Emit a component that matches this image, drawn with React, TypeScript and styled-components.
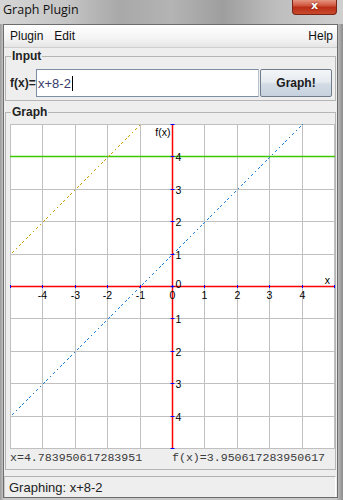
import { createGlobalStyle } from "styled-components";
import styled from "styled-components";

const GlobalStyle = createGlobalStyle`
  html, body {
    margin: 0;
    padding: 0;
    background: #ffffff;
  }
  body {
    font-family: "Liberation Sans", Arial, sans-serif;
  }
`;

const Window = styled.div`
  width: 343px;
  height: 500px;
  display: flex;
  flex-direction: column;
  background: linear-gradient(90deg, #9a9a9a 0%, #c8c8c8 1%, #c8c8c8 98%, #8c8c8c 100%);
  overflow: hidden;
`;

const TitleBar = styled.div`
  height: 24px;
  flex-shrink: 0;
  display: flex;
  align-items: flex-start;
  justify-content: space-between;
  padding: 0 6px 0 3px;
  background: linear-gradient(
    90deg,
    #d6d6d6 0%,
    #c4c4c4 20%,
    #a8a8a8 35%,
    #b4b4b4 50%,
    #9e9e9e 65%,
    #bdbdbd 80%,
    #d0d0d0 100%
  );
`;

const Title = styled.span`
  font-family: "Open Sans", "Noto Sans", sans-serif;
  font-size: 12.5px;
  line-height: 20px;
  color: #111;
`;

const CloseButton = styled.div`
  width: 43px;
  height: 15px;
  margin-top: -1px;
  border: 1px solid #7a2418;
  border-top: none;
  border-radius: 0 0 4px 4px;
  background: linear-gradient(180deg, #e8a08c 0%, #d0553c 45%, #b82e16 55%, #c94a2e 100%);
  color: #fff;
  font-family: "DejaVu Sans", sans-serif;
  font-weight: bold;
  font-size: 11px;
  line-height: 13px;
  text-align: center;
  text-shadow: 0 0 2px #5a1008;
`;

const Frame = styled.div`
  flex: 1;
  margin: 0 5px 3px 3px;
  border: 1px solid #6d6d6d;
  background: #eeeeee;
  display: flex;
  flex-direction: column;
`;

const MenuBar = styled.div`
  height: 22px;
  flex-shrink: 0;
  display: flex;
  align-items: center;
  padding: 0 4px 0 6px;
  background: linear-gradient(180deg, #ffffff 0%, #f4f4f4 60%, #e6e6e6 100%);
  border-bottom: 1px solid #cfcfcf;
`;

const MenuItem = styled.span<{ $push?: boolean }>`
  font-size: 12px;
  color: #111;
  margin-right: ${(p) => (p.$push ? "0" : "11px")};
  margin-left: ${(p) => (p.$push ? "auto" : "0")};
`;

const Group = styled.fieldset<{ $grow?: boolean }>`
  margin: 0 1px 0 1px;
  padding: ${(p) => (p.$grow ? "6px 3px 3px 4px" : "7px 3px 3px 4px")};
  border: 1px solid #b5b5b5;
  min-width: 0;
  ${(p) => (p.$grow ? "flex: 1;" : "flex-shrink: 0;")}
`;

const Legend = styled.legend`
  font-size: 12px;
  font-weight: bold;
  color: #222;
  padding: 0 1px;
  margin-left: 1px;
  line-height: 12px;
`;

const InputRow = styled.div`
  display: flex;
  align-items: center;
  height: 28px;
`;

const FxLabel = styled.span`
  font-size: 12px;
  font-weight: bold;
  color: #222;
  width: 26px;
  flex-shrink: 0;
`;

const FormulaField = styled.div`
  flex: 1;
  height: 26px;
  border: 1px solid #7c8ea3;
  border-right-color: #b6c2cf;
  background: #ffffff;
  display: flex;
  align-items: center;
  padding-left: 1px;
  font-size: 13px;
  color: #3b3b6b;
`;

const Caret = styled.span`
  display: inline-block;
  width: 1px;
  height: 15px;
  background: #000;
  margin-left: 1px;
`;

const GraphButton = styled.div`
  width: 70px;
  height: 26px;
  margin-left: 1px;
  border: 1px solid #707c8a;
  border-radius: 2px;
  background: linear-gradient(180deg, #f4f6f8 0%, #e6ebf0 45%, #d2dbe5 55%, #c6d2df 100%);
  display: flex;
  align-items: center;
  justify-content: center;
  font-size: 12px;
  font-weight: bold;
  color: #1a1a1a;
`;

const Spacer = styled.div<{ $h: number }>`
  height: ${(p) => p.$h}px;
  flex-shrink: 0;
`;

const PlotWrap = styled.div`
  display: flex;
  flex-direction: column;
`;

const Readout = styled.div`
  display: grid;
  grid-template-columns: 162px 162px;
  height: 17px;
  align-items: center;
  font-family: "Liberation Mono", "Courier New", monospace;
  font-size: 11.6px;
  color: #3a3a3a;
  white-space: nowrap;
`;

const StatusBar = styled.div`
  margin: 6px 1px 0 0;
  height: 20px;
  flex-shrink: 0;
  border-top: 1px solid #b0b0b0;
  border-left: 1px solid #c8c8c8;
  border-right: 1px solid #ffffff;
  display: flex;
  align-items: center;
  padding-left: 4px;
  font-size: 13px;
  color: #222;
`;

const U = 32.4;
const px = (x: number) => Math.round((x + 5) * U) + 0.5;
const py = (y: number) => Math.round((5 - y) * U) + 0.5;

const Plot = () => {
  const units = [-5, -4, -3, -2, -1, 0, 1, 2, 3, 4, 5];
  return (
    <svg width={325} height={325} viewBox="0 0 325 325" style={{ display: "block" }}>
      <rect x={0} y={0} width={325} height={325} fill="#ffffff" />
      {units.map((u) => (
        <g key={`g${u}`}>
          <line x1={px(u)} y1={0} x2={px(u)} y2={325} stroke="#c0c0c0" strokeWidth={1} />
          <line x1={0} y1={py(u)} x2={325} y2={py(u)} stroke="#c0c0c0" strokeWidth={1} />
        </g>
      ))}
      {/* horizontal reference line */}
      <line x1={0} y1={py(4)} x2={325} y2={py(4)} stroke="#3cc800" strokeWidth={1.5} />
      {/* plotted lines */}
      <line
        x1={px(-5)}
        y1={py(1)}
        x2={px(-1)}
        y2={py(5)}
        stroke="#c9a000"
        strokeWidth={1.2}
        strokeDasharray="1 1"
        shapeRendering="crispEdges"
      />
      <line
        x1={px(-5)}
        y1={py(-4)}
        x2={px(4)}
        y2={py(5)}
        stroke="#1e7fd6"
        strokeWidth={1.2}
        strokeDasharray="1 1"
        shapeRendering="crispEdges"
      />
      {/* axes */}
      <line x1={0} y1={py(0)} x2={325} y2={py(0)} stroke="#ff0000" strokeWidth={1.5} />
      <line x1={px(0)} y1={0} x2={px(0)} y2={325} stroke="#ff0000" strokeWidth={1.5} />
      {units.map((u) => (
        <g key={`t${u}`}>
          <line x1={px(u)} y1={py(0) - 1.5} x2={px(u)} y2={py(0) + 1.5} stroke="#0000ff" strokeWidth={1} />
          <line x1={px(0) - 2} y1={py(u)} x2={px(0) + 2} y2={py(u)} stroke="#0000ff" strokeWidth={1} />
        </g>
      ))}
      <g fontFamily="Liberation Sans, Arial, sans-serif" fontSize={10.5} fill="#000">
        {[-4, -3, -2, -1, 0, 1, 2, 3, 4].map((u) => (
          <text key={`xl${u}`} x={px(u)} y={py(0) + 12} textAnchor="middle">
            {u}
          </text>
        ))}
        {[4, 3, 2, 1, -1, -2, -3, -4].map((u) => (
          <text key={`yl${u}`} x={px(0) + 3} y={py(u) + 4}>
            {Math.abs(u)}
          </text>
        ))}
        <text x={px(0) + 3} y={py(0) + 1}>0</text>
        <text x={320} y={py(0) - 3} textAnchor="end">x</text>
        <text x={px(0) - 2} y={12} textAnchor="end">f(x)</text>
      </g>
    </svg>
  );
};

export default function App() {
  return (
    <>
      <GlobalStyle />
      <Window>
        <TitleBar>
          <Title>Graph Plugin</Title>
          <CloseButton>x</CloseButton>
        </TitleBar>
        <Frame>
          <MenuBar>
            <MenuItem>Plugin</MenuItem>
            <MenuItem>Edit</MenuItem>
            <MenuItem $push>Help</MenuItem>
          </MenuBar>
          <Spacer $h={2} />
          <Group>
            <Legend>Input</Legend>
            <InputRow>
              <FxLabel>f(x)=</FxLabel>
              <FormulaField>
                x+8-2
                <Caret />
              </FormulaField>
              <GraphButton>Graph!</GraphButton>
            </InputRow>
          </Group>
          <Spacer $h={5} />
          <Group $grow>
            <Legend>Graph</Legend>
            <PlotWrap>
              <Plot />
              <Readout>
                <span>x=4.783950617283951</span>
                <span>f(x)=3.950617283950617</span>
              </Readout>
            </PlotWrap>
          </Group>
          <StatusBar>Graphing: x+8-2</StatusBar>
        </Frame>
      </Window>
    </>
  );
}
